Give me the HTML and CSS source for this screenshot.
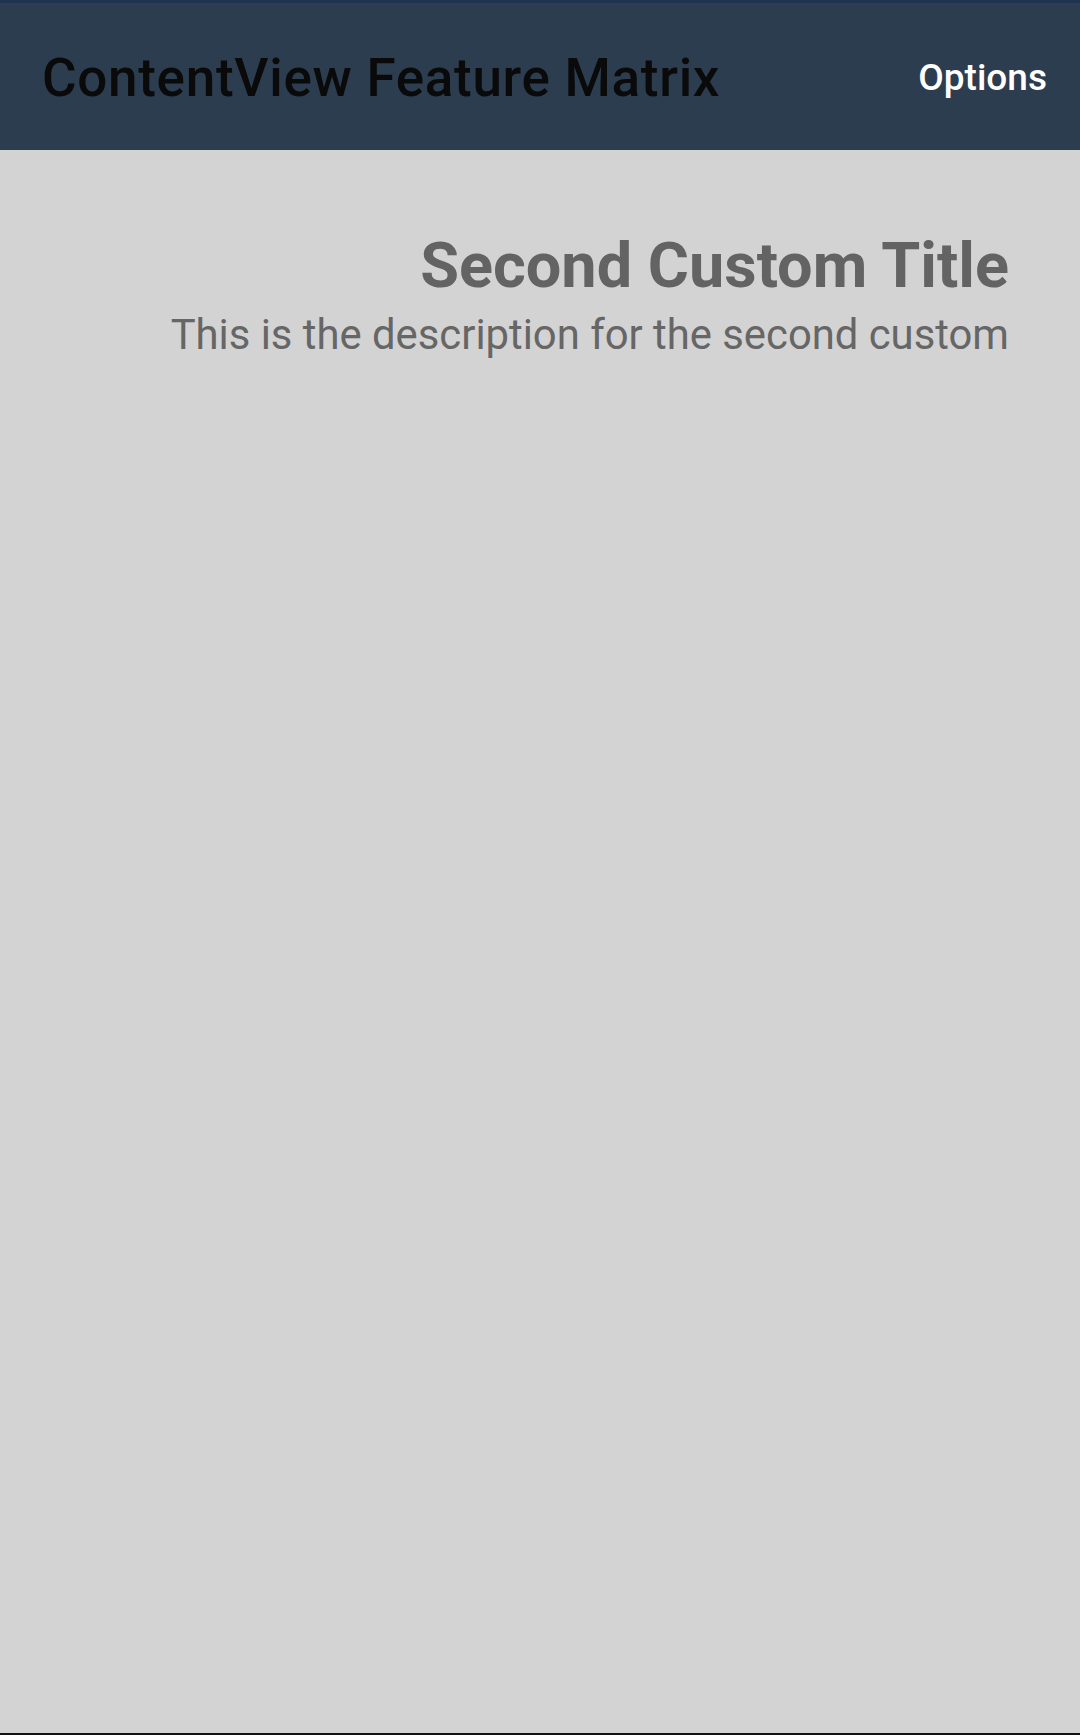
FILE: index.html
```html
<!DOCTYPE html>
<html>
<head>
<meta charset="utf-8">
<link rel="stylesheet" href="styles.css">
</head>
<body>
<div class="app">
  <header class="bar">
    <h1 class="bar-title">ContentView Feature Matrix</h1>
    <span class="bar-action">Options</span>
  </header>
  <main class="content">
    <h2 class="custom-title">Second Custom Title</h2>
    <p class="custom-desc">This is the description for the second custom</p>
  </main>
</div>
</body>
</html>
```
FILE: styles.css
```css
html, body {
  margin: 0;
  padding: 0;
}
body {
  font-family: Roboto, "Noto Sans", sans-serif;
  background: #d3d3d3;
}
.app {
  height: 1735px;
  box-sizing: border-box;
  display: flex;
  flex-direction: column;
  border-bottom: 2px solid #111;
}
.bar {
  height: 150px;
  box-sizing: border-box;
  border-top: 3px solid #1d3350;
  background: #2c3d50;
  display: flex;
  align-items: center;
  justify-content: space-between;
  padding: 2px 33px 0 42px;
}
.bar-title {
  margin: 0;
  font-size: 53px;
  font-weight: 500;
  color: #0a0a0a;
  letter-spacing: 0.7px;
}
.bar-action {
  font-size: 37px;
  font-weight: 500;
  color: #ffffff;
}
.content {
  flex: 1;
  display: flex;
  flex-direction: column;
  align-items: flex-end;
  padding: 78px 71px 0 0;
}
.custom-title {
  margin: 0;
  font-size: 63px;
  font-weight: 700;
  color: #636363;
  line-height: 1.2;
}
.custom-desc {
  margin: 6px 0 0;
  font-size: 41.8px;
  font-weight: 400;
  color: #666666;
  line-height: 1.2;
  white-space: nowrap;
}
```
